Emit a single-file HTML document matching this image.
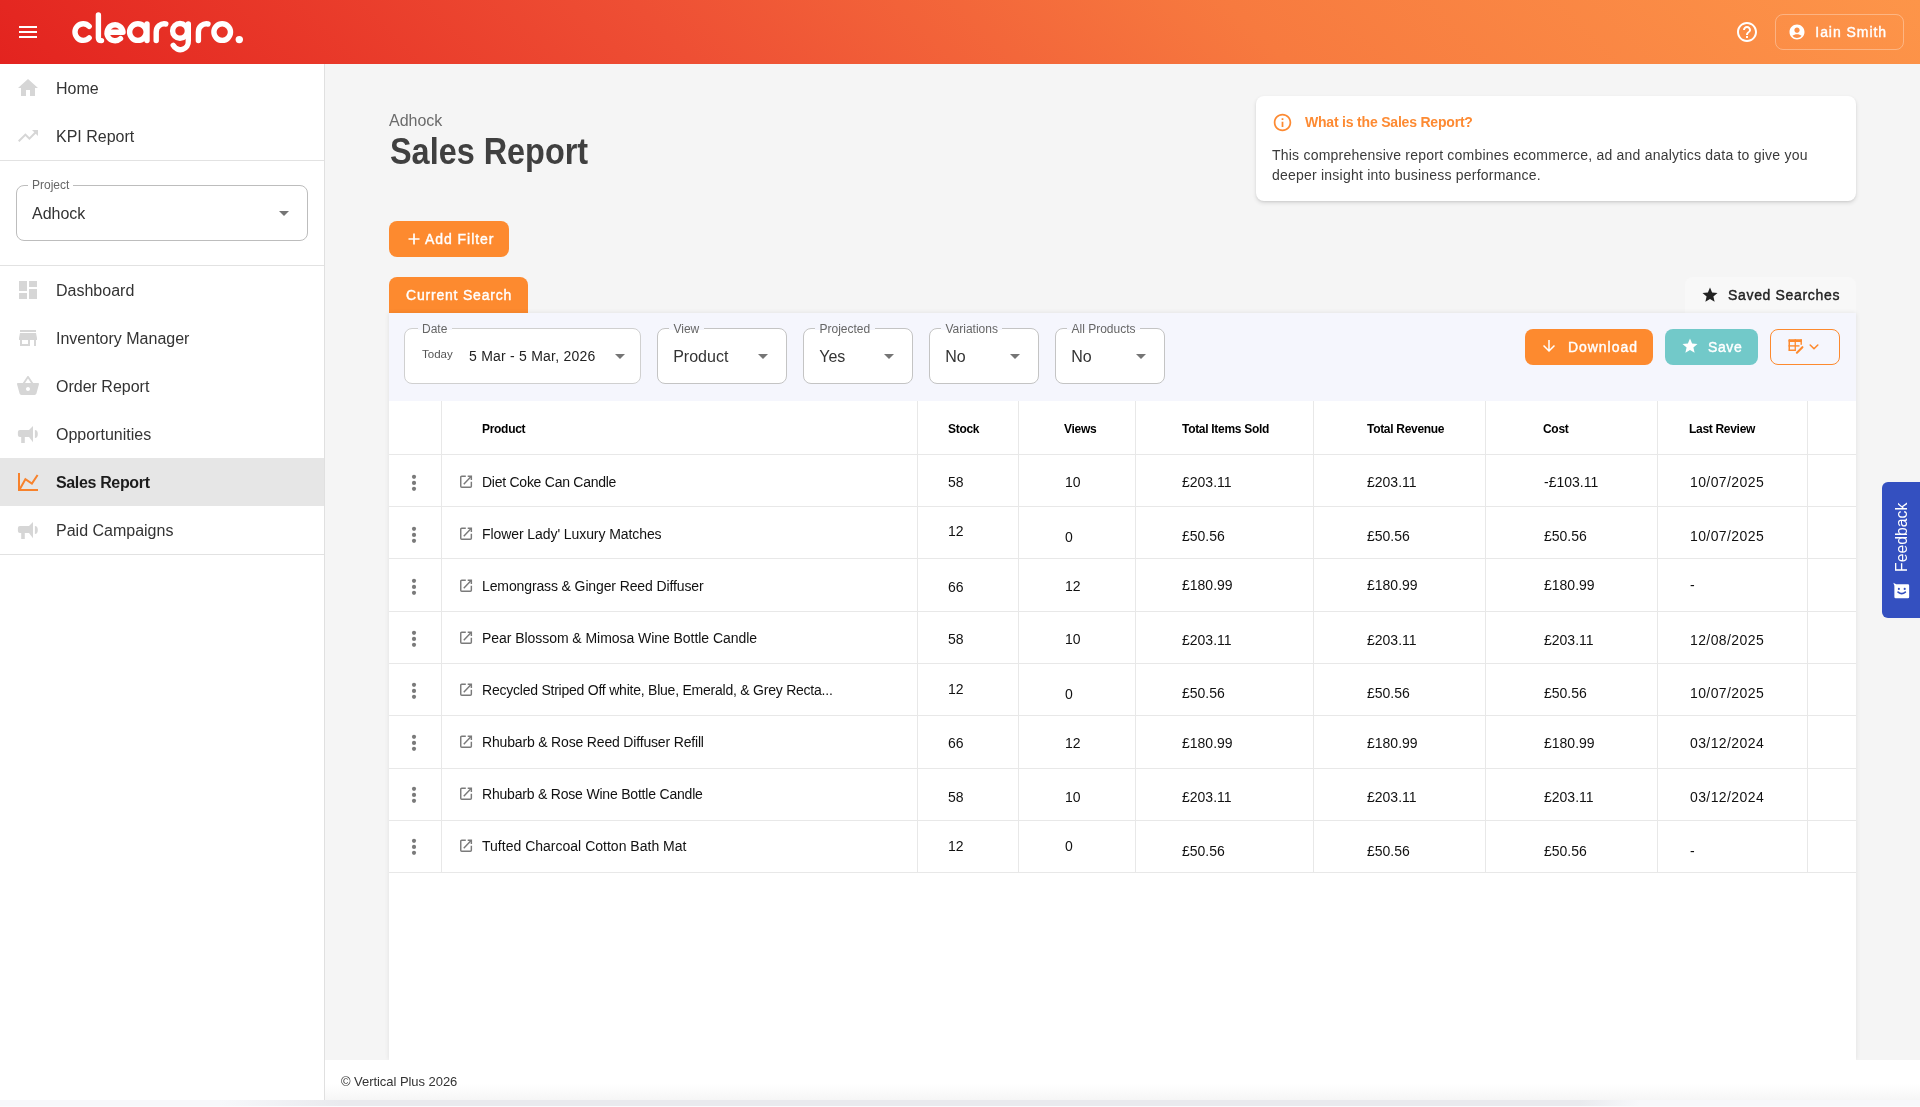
<!DOCTYPE html>
<html><head><meta charset="utf-8">
<style>
*{box-sizing:border-box;margin:0;padding:0}
html,body{width:1920px;height:1107px;overflow:hidden;background:#f5f5f5;font-family:"Liberation Sans",sans-serif;color:#222}
#root{position:absolute;left:0;top:0;width:1920px;height:1107px;overflow:hidden;will-change:transform;background:#f5f5f5}
.a{position:absolute}
.t{position:absolute;white-space:nowrap;line-height:1}
#hdr{position:absolute;left:0;top:0;width:1920px;height:64px;background:linear-gradient(45deg,#e3231f 0%,#ee4f34 35%,#f77a3f 65%,#fd9549 100%)}
#side{position:absolute;left:0;top:64px;width:325px;height:1036px;background:#fff;border-right:1px solid #e0e0e0}
.nav{position:absolute;left:0;width:324px;height:48px}
.nav svg{position:absolute;left:16px;top:12px;width:24px;height:24px}
.nav .tx{position:absolute;left:56px;top:17px;font-size:16px;line-height:16px;color:#333;white-space:nowrap}
.hr{position:absolute;left:0;width:324px;height:1px;background:#e2e2e2}
.fld{position:absolute;top:328px;height:56px;background:#fff;border:1px solid #c4c4c4;border-radius:8px}
.fld .lb{position:absolute;top:-7.5px;left:11.3px;padding:0 4.5px 0 4.2px;font-size:12px;line-height:14px;color:#666;background:linear-gradient(#f5f6fd 0,#f5f6fd 8px,#fff 8px)}
.fld .vl{position:absolute;left:15.2px;top:20px;font-size:16px;line-height:16px;color:#333;white-space:nowrap}
.fld svg{position:absolute;right:11px;top:15px;width:24px;height:24px}
.col{position:absolute;top:401px;width:1px;height:471px;background:#e8e8e8}
.row{position:absolute;left:389px;width:1467px;height:1px;background:#e8e8e8}
.th{position:absolute;top:422px;font-size:12px;line-height:14px;font-weight:bold;color:#000;white-space:nowrap;letter-spacing:-0.3px}
.td{position:absolute;font-size:14px;line-height:14px;color:#111;white-space:nowrap}
.md{font-weight:normal;-webkit-text-stroke:0.4px currentColor}
.btn{position:absolute;border-radius:8px;color:#fff;font-weight:normal;font-size:14px;line-height:14px;white-space:nowrap}
</style></head>
<body><div id="root">
<!-- HEADER -->
<div id="hdr">
  <svg class="a" style="left:16px;top:20px" width="24" height="24" viewBox="0 0 24 24"><path fill="#fff" d="M3 18h18v-2H3v2zm0-5h18v-2H3v2zm0-7v2h18V6H3z"/></svg>
  <svg class="a" style="left:0;top:0" width="260" height="64" viewBox="0 0 260 64">
    <g fill="none" stroke="#fff" stroke-width="5.4" stroke-linecap="round" stroke-linejoin="round">
      <path d="M89.2 26.3 A8.3 8.3 0 1 0 89.2 37.9"/>
      <path d="M98.4 15 V38 Q98.4 40.6 101.5 40.6"/>
      <path d="M108 32.2 H123 A8 8 0 1 0 120.5 38.6"/>
      <circle cx="137.9" cy="32.1" r="8.3"/>
      <path d="M147 24 V40.5"/>
      <path d="M156.2 40.5 V32 A8 8 0 0 1 165.8 24"/>
      <circle cx="180" cy="30.9" r="7.4"/>
      <path d="M188.3 24 V41 A8 8 0 0 1 173.2 45.3"/>
      <path d="M198.4 40.5 V32 A8 8 0 0 1 208 24"/>
      <circle cx="222.2" cy="32.1" r="8.3"/>
    </g>
    <circle cx="239.3" cy="39.6" r="3.7" fill="#fff"/>
  </svg>
  <svg class="a" style="left:1735px;top:20px" width="24" height="24" viewBox="0 0 24 24"><path fill="#fff" d="M11 18h2v-2h-2v2zm1-16C6.48 2 2 6.48 2 12s4.48 10 10 10 10-4.48 10-10S17.52 2 12 2zm0 18c-4.41 0-8-3.59-8-8s3.59-8 8-8 8 3.59 8 8-3.59 8-8 8zm0-14c-2.21 0-4 1.79-4 4h2c0-1.1.9-2 2-2s2 .9 2 2c0 2-3 1.75-3 5h2c0-2.25 3-2.5 3-5 0-2.21-1.79-4-4-4z"/></svg>
  <div class="a" style="left:1775px;top:14px;width:129px;height:36px;border:1px solid rgba(255,255,255,0.32);border-radius:8px"></div>
  <svg class="a" style="left:1788px;top:22.7px" width="18" height="18" viewBox="0 0 24 24"><path fill="#fff" d="M12 2C6.48 2 2 6.48 2 12s4.48 10 10 10 10-4.48 10-10S17.52 2 12 2zm0 4c1.93 0 3.5 1.57 3.5 3.5S13.93 13 12 13s-3.5-1.57-3.5-3.5S10.07 6 12 6zm0 14c-2.03 0-4.43-.82-6.14-2.88C7.55 15.8 9.68 15 12 15s4.45.8 6.14 2.12C16.43 19.18 14.03 20 12 20z"/></svg>
  <div class="t md" style="left:1815.3px;top:25px;font-size:14px;color:#fff;letter-spacing:0.95px">Iain Smith</div>
</div>

<!-- SIDEBAR -->
<div id="side">
  <div class="nav" style="top:0"><svg viewBox="0 0 24 24"><path fill="#d6d6d6" d="M10 20v-6h4v6h5v-8h3L12 3 2 12h3v8z"/></svg><span class="tx">Home</span></div>
  <div class="nav" style="top:48px"><svg viewBox="0 0 24 24"><path fill="#d6d6d6" d="M16 6l2.29 2.29-4.88 4.88-4-4L2 16.59 3.41 18l6-6 4 4 6.3-6.29L22 12V6z"/></svg><span class="tx">KPI Report</span></div>
  <div class="hr" style="top:96px"></div>
  <!-- project select -->
  <div class="a" style="left:16px;top:121px;width:292px;height:56px;border:1px solid #bdbdbd;border-radius:8px">
    <div class="t" style="left:11px;top:-7px;padding:0 4px;background:#fff;font-size:12px;color:#666">Project</div>
    <div class="t" style="left:15px;top:20px;font-size:16px;color:#333">Adhock</div>
    <svg class="a" style="left:255px;top:15px" width="24" height="24" viewBox="0 0 24 24"><path fill="#757575" d="M7 10l5 5 5-5z"/></svg>
  </div>
  <div class="hr" style="top:201px"></div>
  <div class="nav" style="top:202px"><svg viewBox="0 0 24 24"><path fill="#d6d6d6" d="M3 13h8V3H3v10zm0 8h8v-6H3v6zm10 0h8V11h-8v10zm0-18v6h8V3h-8z"/></svg><span class="tx">Dashboard</span></div>
  <div class="nav" style="top:250px"><svg viewBox="0 0 24 24"><path fill="#d6d6d6" d="M20 4H4v2h16V4zm1 10v-2l-1-5H4l-1 5v2h1v6h10v-6h4v6h2v-6h1zm-9 4H6v-4h6v4z"/></svg><span class="tx">Inventory Manager</span></div>
  <div class="nav" style="top:298px"><svg viewBox="0 0 24 24"><path fill="#d6d6d6" d="M17.21 9l-4.38-6.56c-.19-.28-.51-.42-.83-.42-.32 0-.64.14-.83.43L6.79 9H2c-.55 0-1 .45-1 1 0 .09.01.18.04.27l2.54 9.27c.23.84 1 1.46 1.92 1.46h13c.92 0 1.69-.62 1.93-1.46l2.54-9.27L23 10c0-.55-.45-1-1-1h-4.79zM9 9l3-4.4L15 9H9zm3 8c-1.1 0-2-.9-2-2s.9-2 2-2 2 .9 2 2-.9 2-2 2z"/></svg><span class="tx">Order Report</span></div>
  <div class="nav" style="top:346px"><svg viewBox="0 0 24 24"><path fill="#d6d6d6" d="M1.9 10a2 2 0 0 1 2-2H13L17 4V20.2L13 15H8.8V21H5.2V15H3.9a2 2 0 0 1-2-2z M18.9 8a2.9 4 0 0 1 0 8z"/></svg><span class="tx">Opportunities</span></div>
  <div class="nav" style="top:394px;background:#e6e6e6"><svg viewBox="0 0 24 24"><g fill="none" stroke="#f7822c" stroke-width="2"><path d="M3 2.9V20H22"/><path d="M3.6 19.4L9.4 9.2 15.9 13.6 21.6 5"/></g></svg><span class="tx" style="font-weight:bold;color:#1c1c1c;letter-spacing:-0.35px">Sales Report</span></div>
  <div class="nav" style="top:442px"><svg viewBox="0 0 24 24"><path fill="#d6d6d6" d="M1.9 10a2 2 0 0 1 2-2H13L17 4V20.2L13 15H8.8V21H5.2V15H3.9a2 2 0 0 1-2-2z M18.9 8a2.9 4 0 0 1 0 8z"/></svg><span class="tx">Paid Campaigns</span></div>
  <div class="hr" style="top:490px"></div>
</div>

<!-- MAIN HEADINGS -->
<div class="t" style="left:389px;top:113px;font-size:16px;color:#6b6b6b">Adhock</div>
<div class="t" style="left:389.5px;top:134px;font-size:36px;font-weight:bold;color:#404040;transform:scaleX(0.9);transform-origin:0 0">Sales Report</div>

<!-- INFO CARD -->
<div class="a" style="left:1256px;top:96px;width:600px;height:105px;background:#fff;border-radius:8px;box-shadow:0 2px 4px rgba(0,0,0,0.12),0 1px 2px rgba(0,0,0,0.06)">
  <svg class="a" style="left:16px;top:16px" width="21" height="21" viewBox="0 0 24 24"><path fill="#fd8a32" d="M11 7h2v2h-2zm0 4h2v6h-2zm1-9C6.48 2 2 6.48 2 12s4.48 10 10 10 10-4.48 10-10S17.52 2 12 2zm0 18c-4.41 0-8-3.59-8-8s3.59-8 8-8 8 3.59 8 8-3.59 8-8 8z"/></svg>
  <div class="t" style="left:49px;top:19px;font-size:14px;font-weight:bold;color:#fd8a32;letter-spacing:-0.2px">What is the Sales Report?</div>
  <div class="a" style="left:16px;top:49px;width:580px;font-size:14px;line-height:20px;color:#3a3a3a;letter-spacing:0.22px">This comprehensive report combines ecommerce, ad and analytics data to give you<br>deeper insight into business performance.</div>
</div>

<!-- ADD FILTER -->
<div class="btn" style="left:389px;top:221px;width:120px;height:36px;background:#fd8a2f">
  <svg class="a" style="left:17px;top:10px" width="16" height="16" viewBox="0 0 16 16"><path fill="none" stroke="#fff" stroke-width="1.7" d="M8 2.5v11M2.5 8h11"/></svg>
  <div class="t md" style="left:36px;top:11px;letter-spacing:0.95px">Add Filter</div>
</div>

<!-- TABS -->
<div class="btn" style="left:389px;top:277px;width:139px;height:36px;background:#fd8a2f;border-radius:8px 8px 0 0">
  <div class="t md" style="left:17px;top:11px;letter-spacing:0.8px">Current Search</div>
</div>
<div class="a" style="left:1685px;top:277px;width:171px;height:36px;background:#f8f8f8;border-radius:8px 8px 0 0">
  <svg class="a" style="left:16px;top:9px" width="18" height="18" viewBox="0 0 24 24"><path fill="#222" d="M12 17.27L18.18 21l-1.64-7.03L22 9.24l-7.19-.61L12 2 9.19 8.63 2 9.24l5.46 4.73L5.82 21z"/></svg>
  <div class="t md" style="left:43px;top:11px;font-size:14px;color:#222;letter-spacing:0.67px">Saved Searches</div>
</div>

<!-- CARD -->
<div id="card" class="a" style="left:389px;top:313px;width:1467px;height:747px;background:#fff;box-shadow:0 0 5px rgba(0,0,0,0.09)"></div>
<div class="a" style="left:389px;top:313px;width:1467px;height:88px;background:#f5f6fd"></div>

<!-- FILTER FIELDS -->
<div class="fld" style="left:404px;width:237px;border-color:#d0d0d0">
  <div class="lb" style="left:12.8px">Date</div>
  <div class="t" style="left:17px;top:20px;font-size:11.5px;color:#555">Today</div>
  <div class="t" style="left:64px;top:20px;font-size:14px;color:#222;letter-spacing:0.23px">5 Mar - 5 Mar, 2026</div>
  <svg viewBox="0 0 24 24" style="right:8px"><path fill="#757575" d="M7 10l5 5 5-5z"/></svg>
</div>
<div class="fld" style="left:657px;width:130px">
  <div class="lb">View</div>
  <div class="vl">Product</div>
  <svg viewBox="0 0 24 24"><path fill="#757575" d="M7 10l5 5 5-5z"/></svg>
</div>
<div class="fld" style="left:803px;width:110px">
  <div class="lb">Projected</div>
  <div class="vl">Yes</div>
  <svg viewBox="0 0 24 24"><path fill="#757575" d="M7 10l5 5 5-5z"/></svg>
</div>
<div class="fld" style="left:929px;width:110px">
  <div class="lb">Variations</div>
  <div class="vl">No</div>
  <svg viewBox="0 0 24 24"><path fill="#757575" d="M7 10l5 5 5-5z"/></svg>
</div>
<div class="fld" style="left:1055px;width:110px">
  <div class="lb">All Products</div>
  <div class="vl">No</div>
  <svg viewBox="0 0 24 24"><path fill="#757575" d="M7 10l5 5 5-5z"/></svg>
</div>

<!-- ACTION BUTTONS -->
<div class="btn" style="left:1525px;top:329px;width:128px;height:36px;background:#fd8a2f">
  <svg class="a" style="left:15px;top:8px" width="18" height="18" viewBox="0 0 24 24"><path fill="#fff" d="M20 12l-1.41-1.41L13 16.17V4h-2v12.17l-5.58-5.59L4 12l8 8 8-8z"/></svg>
  <div class="t md" style="left:43px;top:11px;letter-spacing:0.95px">Download</div>
</div>
<div class="btn" style="left:1665px;top:329px;width:93px;height:36px;background:#72c9c9">
  <svg class="a" style="left:16px;top:8px" width="18" height="18" viewBox="0 0 24 24"><path fill="#fff" d="M12 17.27L18.18 21l-1.64-7.03L22 9.24l-7.19-.61L12 2 9.19 8.63 2 9.24l5.46 4.73L5.82 21z"/></svg>
  <div class="t md" style="left:43px;top:11px;letter-spacing:0.6px">Save</div>
</div>
<div class="a" style="left:1770px;top:329px;width:70px;height:36px;border:1px solid #fd8a2f;border-radius:8px">
  <svg class="a" style="left:-1px;top:-1px" width="70" height="36" viewBox="0 0 70 36">
    <g fill="#fd8a2f">
      <rect x="18.5" y="10.2" width="13.4" height="2.7" rx="1"/>
      <rect x="18.5" y="10.2" width="1.5" height="11.7" rx="0.7"/>
      <rect x="24.6" y="10.2" width="1.3" height="11.7"/>
      <rect x="18.5" y="16.2" width="11" height="1.4"/>
      <rect x="18.5" y="20.5" width="7.4" height="1.4" rx="0.7"/>
      <rect x="30.5" y="10.2" width="1.4" height="5.6"/>
    </g>
    <path d="M26.9 23.7L32.4 18.2" stroke="#fd8a2f" stroke-width="2.1" stroke-linecap="round"/>
    <path d="M40.2 16l3.8 3.7 3.8-3.7" fill="none" stroke="#fd8a2f" stroke-width="1.6" stroke-linecap="round" stroke-linejoin="round"/>
  </svg>
</div>
<!-- TABLE -->
<div class="col" style="left:441px"></div>
<div class="col" style="left:917px"></div>
<div class="col" style="left:1018px"></div>
<div class="col" style="left:1135px"></div>
<div class="col" style="left:1313px"></div>
<div class="col" style="left:1485px"></div>
<div class="col" style="left:1657px"></div>
<div class="col" style="left:1807px"></div>
<div class="row" style="top:454px"></div>
<div class="row" style="top:506px"></div>
<div class="row" style="top:558px"></div>
<div class="row" style="top:611px"></div>
<div class="row" style="top:663px"></div>
<div class="row" style="top:715px"></div>
<div class="row" style="top:768px"></div>
<div class="row" style="top:820px"></div>
<div class="row" style="top:872px"></div>
<div class="th" style="left:482px">Product</div>
<div class="th" style="left:948px">Stock</div>
<div class="th" style="left:1064px">Views</div>
<div class="th" style="left:1182px">Total Items Sold</div>
<div class="th" style="left:1367px">Total Revenue</div>
<div class="th" style="left:1543px">Cost</div>
<div class="th" style="left:1689px">Last Review</div>
<svg class="a" style="left:402px;top:469.9px" width="24" height="24" viewBox="0 0 24 24"><g fill="#7a7a7a"><circle cx="12" cy="6.8" r="2.1"/><circle cx="12" cy="12.9" r="2.1"/><circle cx="12" cy="18.8" r="2.1"/></g></svg>
<svg class="a" style="left:458px;top:473.5px" width="16" height="16" viewBox="0 0 16 16"><g fill="none" stroke="#7a7a7a" stroke-width="1.45"><path d="M7.8 2.3H3.75a1 1 0 0 0-1 1V12.3a1 1 0 0 0 1 1H12.35a1 1 0 0 0 1-1V7.7"/><path d="M5.75 10.2L13.1 2.6"/><path d="M9.7 2.3H13.35V6"/></g></svg>
<div class="td" style="left:482px;top:475.25px;letter-spacing:-0.258px">Diet Coke Can Candle</div>
<div class="td" style="left:948px;top:475.2px">58</div>
<div class="td" style="left:1065px;top:475.2px">10</div>
<div class="td" style="left:1182px;top:475.2px">£203.11</div>
<div class="td" style="left:1367px;top:475.2px">£203.11</div>
<div class="td" style="left:1544px;top:475.2px">-£103.11</div>
<div class="td" style="left:1690px;top:475.2px;letter-spacing:0.4px">10/07/2025</div>
<svg class="a" style="left:402px;top:521.9px" width="24" height="24" viewBox="0 0 24 24"><g fill="#7a7a7a"><circle cx="12" cy="6.8" r="2.1"/><circle cx="12" cy="12.9" r="2.1"/><circle cx="12" cy="18.8" r="2.1"/></g></svg>
<svg class="a" style="left:458px;top:525.5px" width="16" height="16" viewBox="0 0 16 16"><g fill="none" stroke="#7a7a7a" stroke-width="1.45"><path d="M7.8 2.3H3.75a1 1 0 0 0-1 1V12.3a1 1 0 0 0 1 1H12.35a1 1 0 0 0 1-1V7.7"/><path d="M5.75 10.2L13.1 2.6"/><path d="M9.7 2.3H13.35V6"/></g></svg>
<div class="td" style="left:482px;top:527.25px;letter-spacing:-0.078px">Flower Lady' Luxury Matches</div>
<div class="td" style="left:948px;top:523.9px">12</div>
<div class="td" style="left:1065px;top:529.5px">0</div>
<div class="td" style="left:1182px;top:529.0px">£50.56</div>
<div class="td" style="left:1367px;top:529.0px">£50.56</div>
<div class="td" style="left:1544px;top:529.0px">£50.56</div>
<div class="td" style="left:1690px;top:529.0px;letter-spacing:0.4px">10/07/2025</div>
<svg class="a" style="left:402px;top:573.9px" width="24" height="24" viewBox="0 0 24 24"><g fill="#7a7a7a"><circle cx="12" cy="6.8" r="2.1"/><circle cx="12" cy="12.9" r="2.1"/><circle cx="12" cy="18.8" r="2.1"/></g></svg>
<svg class="a" style="left:458px;top:577.5px" width="16" height="16" viewBox="0 0 16 16"><g fill="none" stroke="#7a7a7a" stroke-width="1.45"><path d="M7.8 2.3H3.75a1 1 0 0 0-1 1V12.3a1 1 0 0 0 1 1H12.35a1 1 0 0 0 1-1V7.7"/><path d="M5.75 10.2L13.1 2.6"/><path d="M9.7 2.3H13.35V6"/></g></svg>
<div class="td" style="left:482px;top:579.25px;letter-spacing:-0.119px">Lemongrass &amp; Ginger Reed Diffuser</div>
<div class="td" style="left:948px;top:579.6px">66</div>
<div class="td" style="left:1065px;top:578.8px">12</div>
<div class="td" style="left:1182px;top:578.3px">£180.99</div>
<div class="td" style="left:1367px;top:578.3px">£180.99</div>
<div class="td" style="left:1544px;top:578.3px">£180.99</div>
<div class="td" style="left:1690px;top:578.3px;letter-spacing:0.4px">-</div>
<svg class="a" style="left:402px;top:625.9px" width="24" height="24" viewBox="0 0 24 24"><g fill="#7a7a7a"><circle cx="12" cy="6.8" r="2.1"/><circle cx="12" cy="12.9" r="2.1"/><circle cx="12" cy="18.8" r="2.1"/></g></svg>
<svg class="a" style="left:458px;top:629.5px" width="16" height="16" viewBox="0 0 16 16"><g fill="none" stroke="#7a7a7a" stroke-width="1.45"><path d="M7.8 2.3H3.75a1 1 0 0 0-1 1V12.3a1 1 0 0 0 1 1H12.35a1 1 0 0 0 1-1V7.7"/><path d="M5.75 10.2L13.1 2.6"/><path d="M9.7 2.3H13.35V6"/></g></svg>
<div class="td" style="left:482px;top:631.25px;letter-spacing:-0.051px">Pear Blossom &amp; Mimosa Wine Bottle Candle</div>
<div class="td" style="left:948px;top:632.3px">58</div>
<div class="td" style="left:1065px;top:632.3px">10</div>
<div class="td" style="left:1182px;top:633.3px">£203.11</div>
<div class="td" style="left:1367px;top:633.3px">£203.11</div>
<div class="td" style="left:1544px;top:633.3px">£203.11</div>
<div class="td" style="left:1690px;top:633.3px;letter-spacing:0.4px">12/08/2025</div>
<svg class="a" style="left:402px;top:677.9px" width="24" height="24" viewBox="0 0 24 24"><g fill="#7a7a7a"><circle cx="12" cy="6.8" r="2.1"/><circle cx="12" cy="12.9" r="2.1"/><circle cx="12" cy="18.8" r="2.1"/></g></svg>
<svg class="a" style="left:458px;top:681.5px" width="16" height="16" viewBox="0 0 16 16"><g fill="none" stroke="#7a7a7a" stroke-width="1.45"><path d="M7.8 2.3H3.75a1 1 0 0 0-1 1V12.3a1 1 0 0 0 1 1H12.35a1 1 0 0 0 1-1V7.7"/><path d="M5.75 10.2L13.1 2.6"/><path d="M9.7 2.3H13.35V6"/></g></svg>
<div class="td" style="left:482px;top:683.25px;letter-spacing:-0.23px">Recycled Striped Off white, Blue, Emerald, &amp; Grey Recta...</div>
<div class="td" style="left:948px;top:681.6px">12</div>
<div class="td" style="left:1065px;top:686.8px">0</div>
<div class="td" style="left:1182px;top:685.9px">£50.56</div>
<div class="td" style="left:1367px;top:685.9px">£50.56</div>
<div class="td" style="left:1544px;top:685.9px">£50.56</div>
<div class="td" style="left:1690px;top:685.9px;letter-spacing:0.4px">10/07/2025</div>
<svg class="a" style="left:402px;top:729.9px" width="24" height="24" viewBox="0 0 24 24"><g fill="#7a7a7a"><circle cx="12" cy="6.8" r="2.1"/><circle cx="12" cy="12.9" r="2.1"/><circle cx="12" cy="18.8" r="2.1"/></g></svg>
<svg class="a" style="left:458px;top:733.5px" width="16" height="16" viewBox="0 0 16 16"><g fill="none" stroke="#7a7a7a" stroke-width="1.45"><path d="M7.8 2.3H3.75a1 1 0 0 0-1 1V12.3a1 1 0 0 0 1 1H12.35a1 1 0 0 0 1-1V7.7"/><path d="M5.75 10.2L13.1 2.6"/><path d="M9.7 2.3H13.35V6"/></g></svg>
<div class="td" style="left:482px;top:735.25px;letter-spacing:-0.17px">Rhubarb &amp; Rose Reed Diffuser Refill</div>
<div class="td" style="left:948px;top:736.1px">66</div>
<div class="td" style="left:1065px;top:735.6px">12</div>
<div class="td" style="left:1182px;top:736.1px">£180.99</div>
<div class="td" style="left:1367px;top:736.1px">£180.99</div>
<div class="td" style="left:1544px;top:736.1px">£180.99</div>
<div class="td" style="left:1690px;top:736.1px;letter-spacing:0.4px">03/12/2024</div>
<svg class="a" style="left:402px;top:781.9px" width="24" height="24" viewBox="0 0 24 24"><g fill="#7a7a7a"><circle cx="12" cy="6.8" r="2.1"/><circle cx="12" cy="12.9" r="2.1"/><circle cx="12" cy="18.8" r="2.1"/></g></svg>
<svg class="a" style="left:458px;top:785.5px" width="16" height="16" viewBox="0 0 16 16"><g fill="none" stroke="#7a7a7a" stroke-width="1.45"><path d="M7.8 2.3H3.75a1 1 0 0 0-1 1V12.3a1 1 0 0 0 1 1H12.35a1 1 0 0 0 1-1V7.7"/><path d="M5.75 10.2L13.1 2.6"/><path d="M9.7 2.3H13.35V6"/></g></svg>
<div class="td" style="left:482px;top:787.25px;letter-spacing:-0.2px">Rhubarb &amp; Rose Wine Bottle Candle</div>
<div class="td" style="left:948px;top:790.1px">58</div>
<div class="td" style="left:1065px;top:790.1px">10</div>
<div class="td" style="left:1182px;top:790.1px">£203.11</div>
<div class="td" style="left:1367px;top:790.1px">£203.11</div>
<div class="td" style="left:1544px;top:790.1px">£203.11</div>
<div class="td" style="left:1690px;top:790.1px;letter-spacing:0.4px">03/12/2024</div>
<svg class="a" style="left:402px;top:833.9px" width="24" height="24" viewBox="0 0 24 24"><g fill="#7a7a7a"><circle cx="12" cy="6.8" r="2.1"/><circle cx="12" cy="12.9" r="2.1"/><circle cx="12" cy="18.8" r="2.1"/></g></svg>
<svg class="a" style="left:458px;top:837.5px" width="16" height="16" viewBox="0 0 16 16"><g fill="none" stroke="#7a7a7a" stroke-width="1.45"><path d="M7.8 2.3H3.75a1 1 0 0 0-1 1V12.3a1 1 0 0 0 1 1H12.35a1 1 0 0 0 1-1V7.7"/><path d="M5.75 10.2L13.1 2.6"/><path d="M9.7 2.3H13.35V6"/></g></svg>
<div class="td" style="left:482px;top:839.25px;letter-spacing:0.01px">Tufted Charcoal Cotton Bath Mat</div>
<div class="td" style="left:948px;top:838.5px">12</div>
<div class="td" style="left:1065px;top:838.5px">0</div>
<div class="td" style="left:1182px;top:844.2px">£50.56</div>
<div class="td" style="left:1367px;top:844.2px">£50.56</div>
<div class="td" style="left:1544px;top:844.2px">£50.56</div>
<div class="td" style="left:1690px;top:844.2px;letter-spacing:0.4px">-</div>
<!-- FOOTER -->
<div class="a" style="left:325px;top:1060px;width:1595px;height:40px;background:linear-gradient(#fff 0,#fff 60%,#f6f6f6 100%)"></div>
<div class="t" style="left:341px;top:1075px;font-size:13px;color:#333;letter-spacing:-0.05px">© Vertical Plus 2026</div>
<div class="a" style="left:0;top:1100px;width:1920px;height:6px;background:linear-gradient(90deg,#f7f8fb 0,#f7f8fb 220px,#e9eaee 340px,#e9eaee 1580px,#f7f8fb 1640px,#f7f8fb 100%)"></div><div class="a" style="left:0;top:1106px;width:1920px;height:1px;background:#fbfbfc"></div>
<!-- FEEDBACK -->
<div class="a" style="left:1882px;top:482px;width:38px;height:136px;background:#3450c0;border-radius:6px 0 0 6px">
  <div class="t" style="left:12px;top:89.8px;transform:rotate(-90deg);transform-origin:0 0;font-size:15.8px;color:#fff">Feedback</div>
  <svg class="a" style="left:10.5px;top:99.5px" width="17" height="17" viewBox="0 0 16 16"><path fill="#fff" d="M0.3 0.6L3 2H14a1.2 1.2 0 0 1 1.2 1.2V14a1.2 1.2 0 0 1-1.2 1.2H2.5A1.2 1.2 0 0 1 1.3 14V3.5z"/><path fill="none" stroke="#3450c0" stroke-width="1.6" stroke-linecap="round" d="M4.8 9.5q3.4 2.8 6.8 0"/><circle cx="5.5" cy="6.5" r="1" fill="#3450c0"/><circle cx="11" cy="6.5" r="1" fill="#3450c0"/></svg>
</div>
</div></body></html>
